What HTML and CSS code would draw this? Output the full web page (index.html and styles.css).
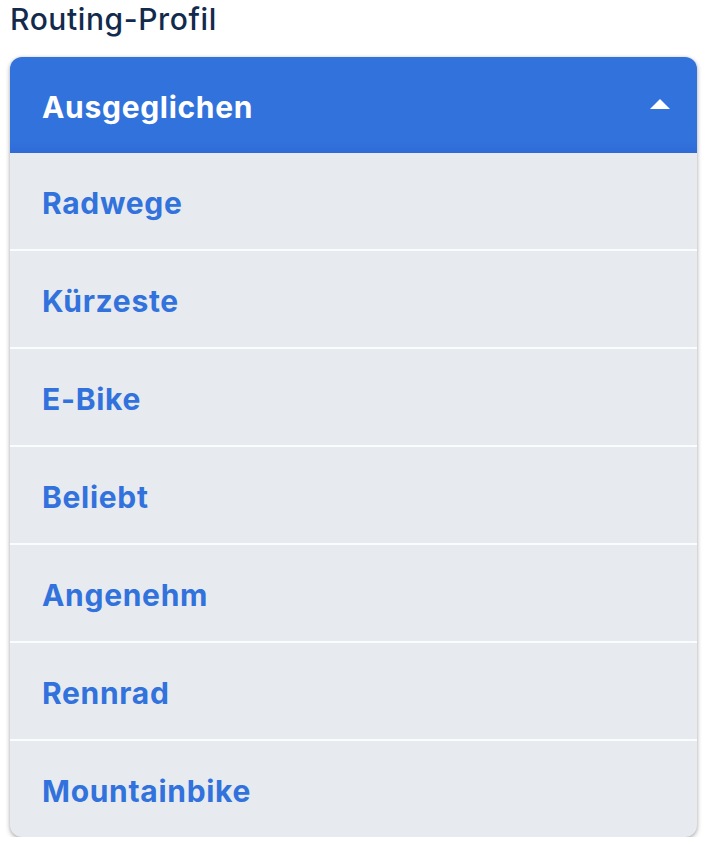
FILE: index.html
```html
<!DOCTYPE html>
<html lang="de">
<head>
<meta charset="utf-8">
<title>Routing-Profil</title>
<link rel="stylesheet" href="styles.css">
</head>
<body>
<div class="field">
  <div class="label">Routing-Profil</div>
  <div class="dropdown">
    <div class="dropdown-head">
      <span class="dropdown-value">Ausgeglichen</span>
      <svg class="caret" width="20" height="10" viewBox="0 0 20 10"><polygon points="0,10 10,0 20,10" fill="#fff"/></svg>
    </div>
    <ul class="options">
      <li class="option">Radwege</li>
      <li class="option">Kürzeste</li>
      <li class="option">E-Bike</li>
      <li class="option">Beliebt</li>
      <li class="option">Angenehm</li>
      <li class="option">Rennrad</li>
      <li class="option">Mountainbike</li>
    </ul>
  </div>
</div>
</body>
</html>
```
FILE: styles.css
```css
* { box-sizing: border-box; }
html, body { margin: 0; padding: 0; background: #fff; }
body {
  font-family: Inter, "Noto Sans", "Liberation Sans", sans-serif;
  padding: 0 9px 0 10px;
}
.field { display: flex; flex-direction: column; }
.label {
  font-size: 30px;
  line-height: 38px;
  color: #122a4c;
  font-weight: 500;
  margin-bottom: 19px;
  letter-spacing: 0.6px;
}
.dropdown {
  border-radius: 12px;
  overflow: hidden;
  background: #e7ebef;
  box-shadow: 0 2px 5px rgba(0,0,0,0.3), 0 0 3px rgba(0,0,0,0.1);
}
.dropdown-head {
  height: 96px;
  background: linear-gradient(#3272dd 0%, #3272dd 88%, #2f6bd6 100%);
  display: flex;
  align-items: center;
  justify-content: space-between;
  padding: 0 27px 0 32px;
}
.dropdown-value {
  color: #fff;
  font-weight: 700;
  font-size: 30px;
  letter-spacing: 0.7px;
  padding-top: 4px;
}
.caret { display: block; margin-top: -2px; }
.options { list-style: none; margin: 0; padding: 0; }
.option {
  height: 98px;
  display: flex;
  align-items: center;
  padding: 4px 0 0 32px;
  color: #3272dd;
  font-weight: 700;
  font-size: 30px;
  letter-spacing: 0.7px;
  border-bottom: 2px solid #fbfcfd;
}
.option:last-child { border-bottom: none; height: 96px; }
```
